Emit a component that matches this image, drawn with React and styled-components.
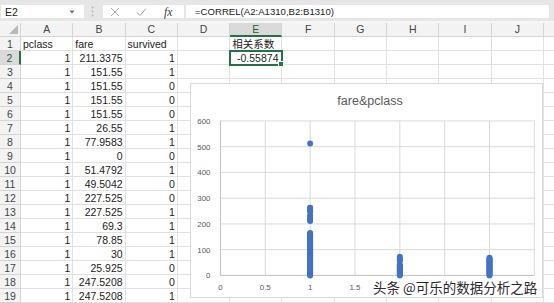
import styled, { createGlobalStyle } from 'styled-components'

const GlobalStyle = createGlobalStyle`
  html, body {
    margin: 0;
    padding: 0;
    background: #fff;
  }
  body {
    font-family: "Liberation Sans", "Noto Sans CJK SC", sans-serif;
    overflow: hidden;
  }
`

// K is only partly on screen, so its letter is left out
const COLUMNS = [ 'A', 'B', 'C', 'D', 'E', 'F', 'G', 'H', 'I', 'J', '' ]

const DATA = [
  [ 'pclass', 'fare', 'survived', '', '相关系数' ],
  [ '1', '211.3375', '1', '', '-0.55874' ],
  [ '1', '151.55', '1' ],
  [ '1', '151.55', '0' ],
  [ '1', '151.55', '0' ],
  [ '1', '151.55', '0' ],
  [ '1', '26.55', '1' ],
  [ '1', '77.9583', '1' ],
  [ '1', '0', '0' ],
  [ '1', '51.4792', '1' ],
  [ '1', '49.5042', '0' ],
  [ '1', '227.525', '0' ],
  [ '1', '227.525', '1' ],
  [ '1', '69.3', '1' ],
  [ '1', '78.85', '1' ],
  [ '1', '30', '1' ],
  [ '1', '25.925', '0' ],
  [ '1', '247.5208', '0' ],
  [ '1', '247.5208', '1' ],
]

// scatter points: [pclass, fare]
const range = (from, to, step) => {
  const out = []
  for (let v = from; v <= to; v += step) out.push(v)
  return out
}

const POINTS = [
  ...range(0, 165, 3).map(v => [ 1, v ]),
  ...[ 211, 215, 221, 227, 233, 247, 253, 262, 263 ].map(v => [ 1, v ]),
  [ 1, 512 ],
  ...range(0, 44, 3).map(v => [ 2, v ]),
  ...[ 56, 61, 65, 73 ].map(v => [ 2, v ]),
  ...range(0, 69, 3).map(v => [ 3, v ]),
]

const xScale = v => 28 + v * 90.57
const yScale = v => 163 - v * 0.26

const isText = v => v !== '' && isNaN(Number(v))



const App = () => {

  return (
    <Page>
      <GlobalStyle />

      <FormulaBar>
        <NameBox>
          E2
          <svg width = "6" height = "4" viewBox = "0 0 6 4">
            <path d = "M0.5 0.5 L5.5 0.5 L3 3.5 Z" fill = "#6b6b6b" />
          </svg>
        </NameBox>

        <Grip>
          <svg width = "3" height = "11" viewBox = "0 0 3 11">
            <circle cx = "1.5" cy = "1.5" r = "0.9" fill = "#b4b4b4" />
            <circle cx = "1.5" cy = "5.5" r = "0.9" fill = "#b4b4b4" />
            <circle cx = "1.5" cy = "9.5" r = "0.9" fill = "#b4b4b4" />
          </svg>
        </Grip>

        <FuncBox>
          <svg width = "10" height = "10" viewBox = "0 0 10 10">
            <path d = "M1 1 L9 9 M9 1 L1 9" stroke = "#a6a6a6" strokeWidth = "1" />
          </svg>
          <svg width = "11" height = "10" viewBox = "0 0 11 10">
            <path d = "M1 5.5 L4 8.5 L10 1.5" stroke = "#a6a6a6" strokeWidth = "1" fill = "none" />
          </svg>
          <FxLabel>fx</FxLabel>
        </FuncBox>

        <FormulaInput>=CORREL(A2:A1310,B2:B1310)</FormulaInput>
      </FormulaBar>

      <Strip />

      <Sheet>
        <Corner />
        { COLUMNS.map((c, i) => (
          <ColHead key = { i } $active = { c === 'E' }>{ c }</ColHead>
        )) }

        { DATA.map((row, r) => (
          <Row key = { r } row = { row } index = { r + 1 } />
        )) }
      </Sheet>

      <Chart>
        <ChartTitle>fare&amp;pclass</ChartTitle>
        <svg width = "353" height = "185" viewBox = "0 0 353 185">
          { [ 0, 100, 200, 300, 400, 500, 600 ].map(v => (
            <g key = { v }>
              <line
                x1 = { 28 } x2 = { 345 }
                y1 = { yScale(v) } y2 = { yScale(v) }
                stroke = { v === 0 ? '#bfbfbf' : '#d9d9d9' } strokeWidth = "1"
              />
              <AxisText x = { 18 } y = { yScale(v) + 3 } textAnchor = "end">{ v }</AxisText>
            </g>
          )) }
          { [ 0, 0.5, 1, 1.5, 2, 2.5, 3, 3.5 ].map(v => (
            <line
              key = { v }
              x1 = { xScale(v) } x2 = { xScale(v) }
              y1 = { 7 } y2 = { 163 }
              stroke = { v === 0 ? '#bfbfbf' : '#d9d9d9' } strokeWidth = "1"
            />
          )) }
          {/* labels from 2 on sit under the watermark */}
          { [ 0, 0.5, 1, 1.5 ].map(v => (
            <AxisText key = { v } x = { xScale(v) } y = { 178 } textAnchor = "middle">{ v }</AxisText>
          )) }
          { POINTS.map(([ x, y ], i) => (
            <circle key = { i } cx = { xScale(x) } cy = { yScale(y) } r = "3" fill = "#4472c4" />
          )) }
        </svg>
      </Chart>

      <Watermark>头条 @可乐的数据分析之路</Watermark>
    </Page>
  )

}


const Row = ({ row, index }) => {

  return (
    <>
      <RowHead $active = { index === 2 }>{ index }</RowHead>
      { COLUMNS.map((c, ci) => {
        const value = row[ci] ?? ''
        return (
          <Cell
            key = { ci }
            $align = { isText(value) ? 'left' : 'right' }
            $selected = { index === 2 && c === 'E' }
          >
            { value }
          </Cell>
        )
      }) }
    </>
  )

}


const Page = styled.div`
  position: relative;
  width: 554px;
  height: 303px;
  overflow: hidden;
  background: #fff;
  display: flex;
  flex-direction: column;
`

const FormulaBar = styled.div`
  height: 28px;
  box-sizing: border-box;
  padding: 5px 5px 3px 1px;
  background: #e6e6e6;
  display: flex;
  align-items: stretch;
`

const NameBox = styled.div`
  width: 83px;
  background: #fff;
  display: flex;
  align-items: center;
  justify-content: space-between;
  box-sizing: border-box;
  padding: 0 9px 0 4px;
  font-size: 10.5px;
  color: #222;
`

const Grip = styled.div`
  width: 19px;
  display: flex;
  align-items: center;
  justify-content: center;
  padding-right: 2px;
  box-sizing: border-box;
`

const FuncBox = styled.div`
  width: 81px;
  background: #fff;
  display: flex;
  align-items: center;
  padding-left: 7px;
  box-sizing: border-box;

  svg {
    margin-right: 16px;
  }
`

const FxLabel = styled.span`
  font-family: "Liberation Serif", serif;
  font-style: italic;
  font-size: 11.5px;
  color: #3a3a3a;
  margin-left: 1px;
`

const FormulaInput = styled.div`
  flex: 1;
  margin-left: 2px;
  background: #fff;
  display: flex;
  align-items: center;
  padding-left: 9px;
  font-size: 9.6px;
  color: #222;
`

const Strip = styled.div`
  height: 3px;
  background: #f6f6f6;
`

const Sheet = styled.div`
  display: grid;
  grid-template-columns: 21px repeat(11, 52.3px);
  grid-auto-rows: 14px;
  font-size: 10.5px;
`

const Corner = styled.div`
  position: relative;
  background: #f3f3f3;
  border-right: 1px solid #d4d4d4;
  border-bottom: 1px solid #d4d4d4;
  box-sizing: border-box;

  &::after {
    content: '';
    position: absolute;
    right: 2px;
    bottom: 2px;
    border-style: solid;
    border-width: 0 0 9px 9px;
    border-color: transparent transparent #b8b8b8 transparent;
  }
`

const ColHead = styled.div`
  background: ${ p => p.$active ? '#dadada' : '#f3f3f3' };
  color: ${ p => p.$active ? '#1d5e38' : '#444' };
  border-right: 1px solid #d4d4d4;
  border-bottom: ${ p => p.$active ? '2px solid #217346' : '1px solid #d4d4d4' };
  box-sizing: border-box;
  text-align: center;
  line-height: 13px;
  font-size: 10.5px;
`

const RowHead = styled.div`
  background: ${ p => p.$active ? '#dadada' : '#f3f3f3' };
  color: ${ p => p.$active ? '#1d5e38' : '#444' };
  border-right: ${ p => p.$active ? '2px solid #217346' : '1px solid #d4d4d4' };
  border-bottom: 1px solid #d4d4d4;
  box-sizing: border-box;
  text-align: center;
  line-height: 14px;
  font-size: 10.5px;
`

const Cell = styled.div`
  position: relative;
  border-right: 1px solid #e1e1e1;
  border-bottom: 1px solid #e1e1e1;
  box-sizing: border-box;
  padding: 0 2px;
  line-height: 14px;
  color: #222;
  white-space: nowrap;
  text-align: ${ p => p.$align };
  font-family: "Liberation Sans", "Noto Sans CJK SC", sans-serif;
  ${ p => p.$selected && `
    outline: 2px solid #217346;
    outline-offset: -1px;
    z-index: 1;
    padding-right: 3px;

    &::after {
      content: '';
      position: absolute;
      right: -3px;
      bottom: -3px;
      width: 4px;
      height: 4px;
      background: #217346;
      border: 1px solid #fff;
    }
  ` }
`

const Chart = styled.div`
  position: absolute;
  left: 190px;
  top: 83px;
  width: 353px;
  height: 215px;
  background: #fff;
  border: 1px solid #d9d9d9;
  box-sizing: border-box;
  display: flex;
  flex-direction: column;
  z-index: 2;

  svg {
    display: block;
  }
`

const ChartTitle = styled.div`
  height: 30px;
  box-sizing: border-box;
  padding: 9px 0 0 7px;
  text-align: center;
  font-size: 12.5px;
  line-height: 16px;
  color: #595959;
`

const AxisText = styled.text`
  font-family: "Liberation Sans", sans-serif;
  font-size: 8px;
  fill: #595959;
`

const Watermark = styled.div`
  position: absolute;
  left: 373px;
  top: 278px;
  z-index: 3;
  font-family: "Noto Sans CJK SC", sans-serif;
  font-size: 13.5px;
  line-height: 18px;
  color: #2a2a2a;
  text-shadow:
    1px 0 0 #fff, -1px 0 0 #fff, 0 1px 0 #fff, 0 -1px 0 #fff,
    1px 1px 0 #fff, -1px -1px 0 #fff, 1px -1px 0 #fff, -1px 1px 0 #fff;
`

export default App
